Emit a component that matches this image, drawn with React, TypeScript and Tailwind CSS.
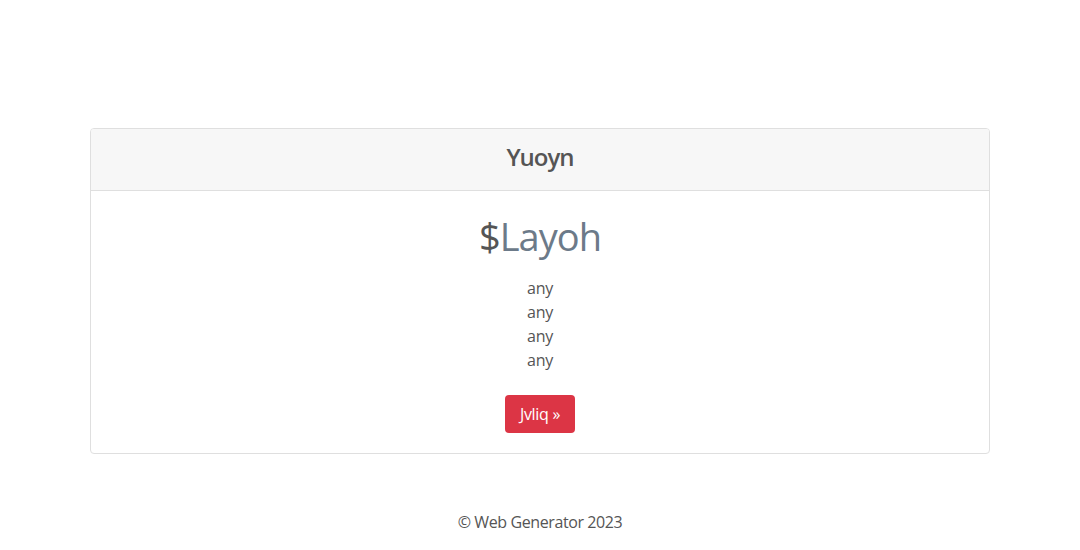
import React from "react";

export default function App() {
  return (
    <div
      className="min-h-[550px] bg-white text-[#555555]"
      style={{ fontFamily: '"Segoe UI", "Open Sans", "Noto Sans", sans-serif' }}
    >
      <div className="pt-[128px]">
        <div className="mx-auto w-[900px] rounded-[4px] border border-[#dfdfdf] text-center">
          <div className="flex h-[62px] items-center justify-center border-b border-[#dfdfdf] bg-[#f7f7f7] pb-[5px] rounded-t-[3px]">
            <h4 className="text-[24px] font-semibold leading-[1.2] tracking-[-1px] text-[#555555]">Yuoyn</h4>
          </div>
          <div className="px-5 pt-[23px] pb-5">
            <h1 className="text-[38px] leading-[1.2] font-normal tracking-[-1px]">
              <span className="text-[#555555]">$</span>
              <span className="text-[#6c7a89]">Layoh</span>
            </h1>
            <ul className="mt-[16px] text-[16px] leading-[24px] tracking-[-0.3px]">
              <li>any</li>
              <li>any</li>
              <li>any</li>
              <li>any</li>
            </ul>
            <button className="mt-[23px] h-[38px] w-[70px] rounded-[4px] bg-[#dc3545] text-[16px] tracking-[-0.3px] text-white">
              Jvliq »
            </button>
          </div>
        </div>
      </div>
      <footer className="mt-[56px] text-center text-[16px] leading-[24px] tracking-[-0.4px] text-[#555555]">
        © Web Generator 2023
      </footer>
    </div>
  );
}
